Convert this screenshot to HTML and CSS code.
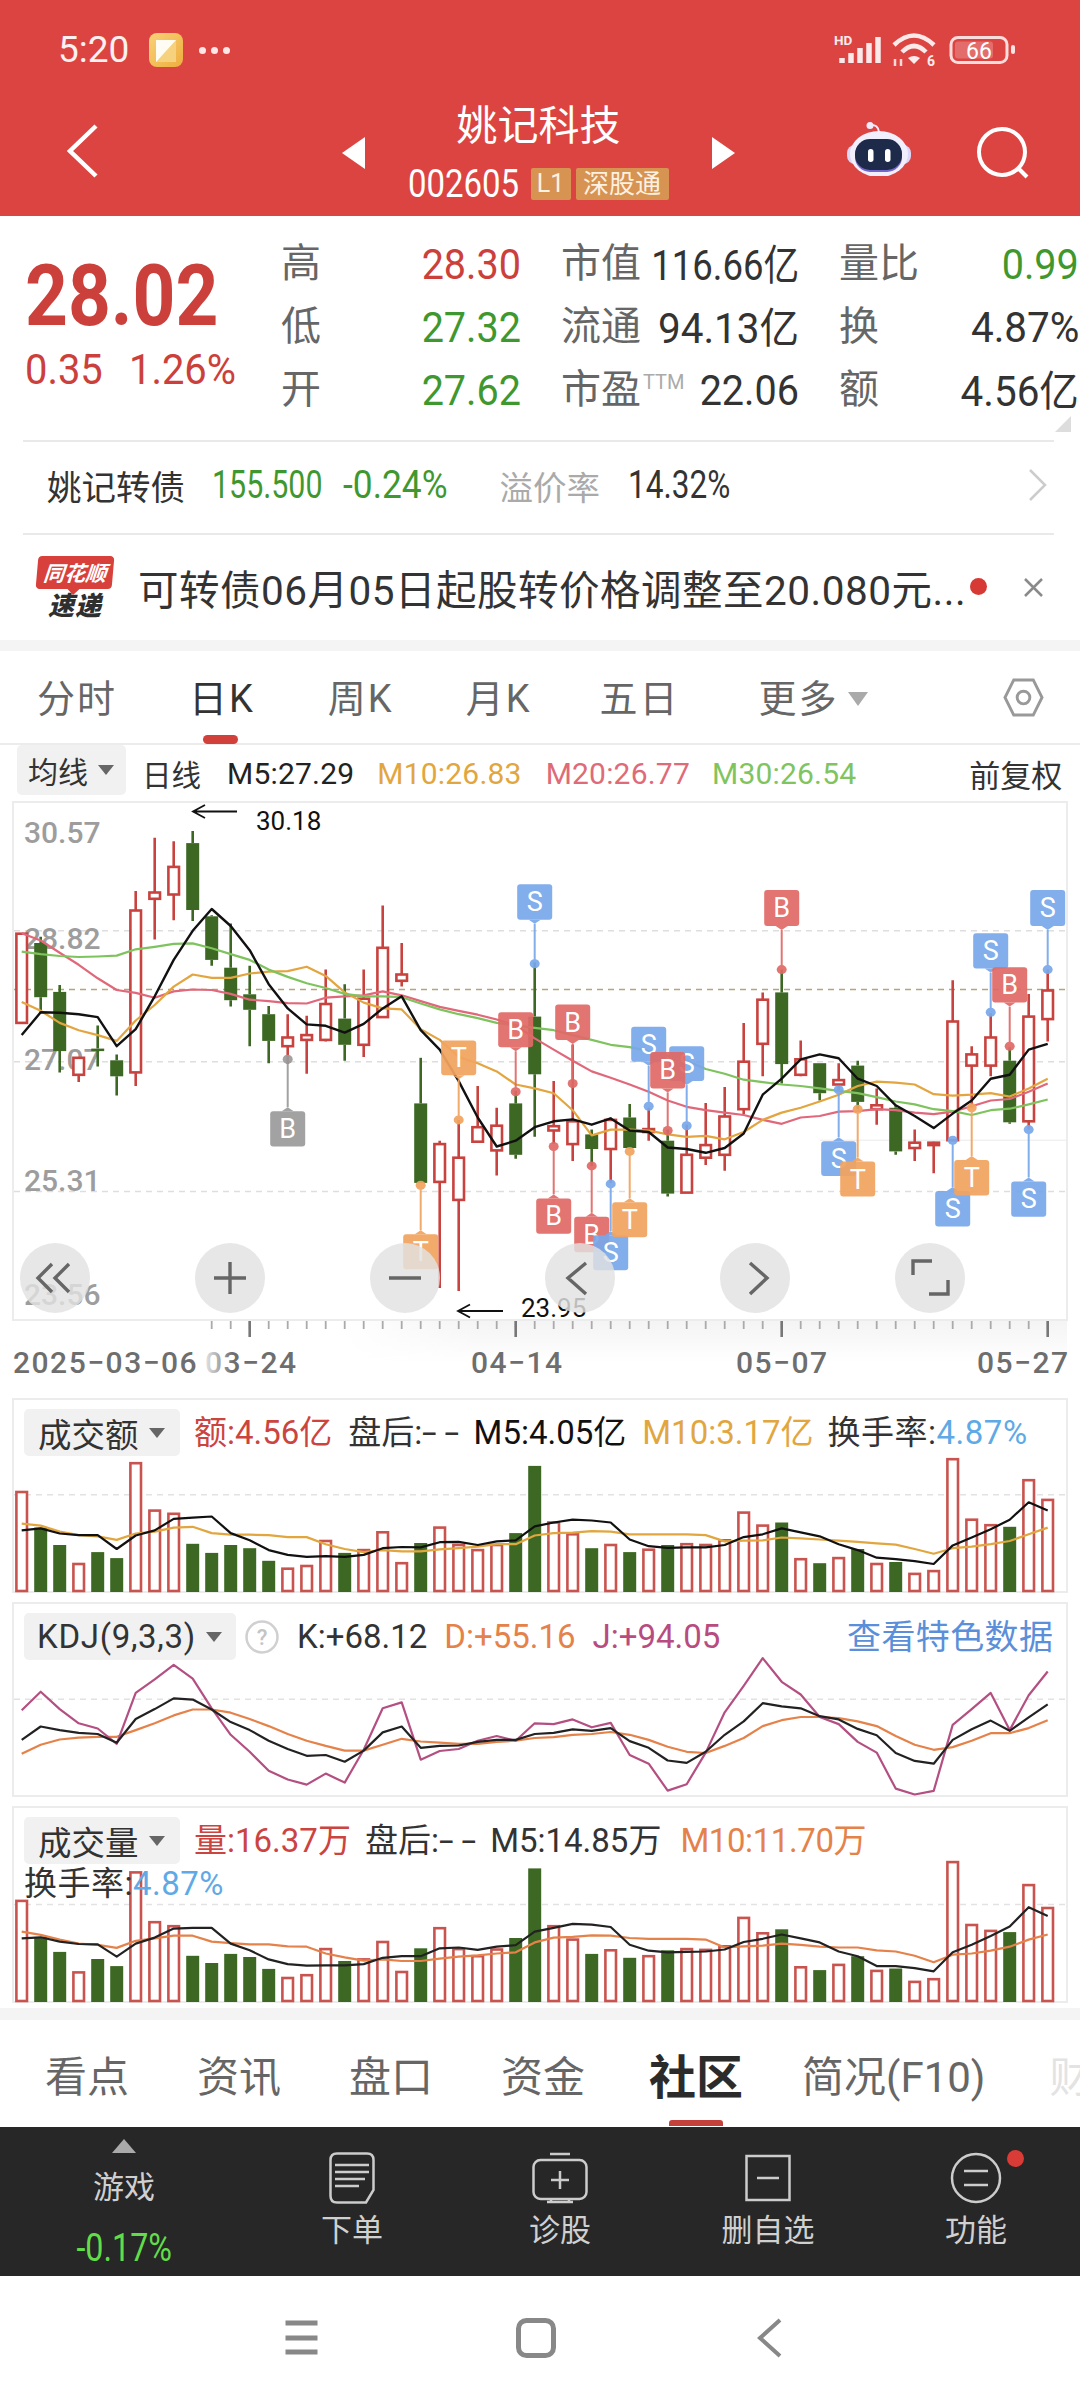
FILE: index.html
```html
<!DOCTYPE html>
<html lang="zh-CN">
<head>
<meta charset="utf-8">
<title>姚记科技</title>
<link rel="stylesheet" href="styles.css">
</head>
<body>
<div class="page">
  <header class="top">
    <div class="status">
      <span class="clock">5:20</span>
      <svg class="app-icon" viewBox="0 0 34 34">
        <defs><linearGradient id="appGrad" x1="0" y1="0" x2="1" y2="1"><stop offset="0" stop-color="#f9d178"/><stop offset="1" stop-color="#eeae3e"/></linearGradient></defs>
        <rect width="34" height="34" rx="8" fill="url(#appGrad)"/>
        <path d="M7 7H27V19L13 29H7Z" fill="#fffdf3"/>
        <path d="M27 7V29H7Z" fill="#f7d27e"/>
      </svg>
      <span class="dots"><i></i><i></i><i></i></span>
      <svg class="status-right" viewBox="0 0 184 32">
        <text x="1" y="10" class="hd">HD</text>
        <path d="M9 28v-5M18 28v-10M27 28v-15M36 28v-20M45 28v-26" class="bars"/>
        <path d="M61 10Q81 -9 101 10M69 17Q81 5 93 17" class="wifi"/>
        <path d="M75 23Q81 19 87 23L81 29Z" fill="#fff" opacity=".9"/>
        <path d="M62 24v7M68 31v-7" class="arrows"/>
        <text x="94" y="31" class="six">6</text>
        <rect x="118" y="2.500" width="56" height="25" rx="7" class="batt"/>
        <rect x="122" y="6.500" width="38" height="17" rx="3" fill="#fff" opacity=".22"/>
        <rect x="178" y="10" width="4" height="9" rx="2" fill="#fff" opacity=".85"/>
        <text x="146" y="24" class="batt-num">66</text>
      </svg>
    </div>
    <div class="titlebar">
      <svg class="back" viewBox="0 0 31 54"><path d="M29 2 L3 27 L29 52"/></svg>
      <div class="stock">
        <svg class="tri" viewBox="0 0 23 32"><path d="M23 0V32L0 16Z"/></svg>
        <div class="stock-mid">
          <div class="stock-name">姚记科技</div>
          <div class="stock-code">
            <span class="code n">002605</span>
            <span class="tag tag-l">L1</span>
            <span class="tag tag-s">深股通</span>
          </div>
        </div>
        <svg class="tri" viewBox="0 0 23 32"><path d="M0 0V32L23 16Z"/></svg>
      </div>
      <svg class="robot" viewBox="0 0 64 54">
        <path d="M23 3Q31 2 32 10" fill="none" stroke="#efeafc" stroke-width="2"/>
        <circle cx="23" cy="3.500" r="3.500" fill="#efeafc"/>
        <rect x="0" y="23" width="64" height="19" rx="8" fill="#dcd7f6"/>
        <ellipse cx="32" cy="32" rx="29" ry="23" fill="#f2effd"/>
        <rect x="8" y="18" width="47" height="32" rx="15" fill="#7465c9"/>
        <rect x="8" y="17" width="47" height="31" rx="15" fill="#1e2a4a"/>
        <rect x="21" y="27" width="5.500" height="13" rx="2.700" fill="#fff"/>
        <rect x="38" y="27" width="5.500" height="13" rx="2.700" fill="#fff"/>
      </svg>
      <svg class="search" viewBox="0 0 52 52"><circle cx="25" cy="25" r="23"/><path d="M41 41l9 9"/></svg>
    </div>
  </header>

  <section class="quote">
    <div class="quote-main">
      <div class="price-box">
        <div class="price n">28.02</div>
        <div class="change n"><span>0.35</span><span>1.26%</span></div>
      </div>
      <div class="stats">
        <div class="stat"><span class="lab">高</span><span class="val n up">28.30</span></div>
        <div class="stat"><span class="lab">市值</span><span class="val n sx85">116.66<b>亿</b></span></div>
        <div class="stat"><span class="lab">量比</span><span class="val n down">0.99</span></div>
        <div class="stat"><span class="lab">低</span><span class="val n down">27.32</span></div>
        <div class="stat"><span class="lab">流通</span><span class="val n sx94">94.13<b>亿</b></span></div>
        <div class="stat"><span class="lab">换</span><span class="val n sx94">4.87%</span></div>
        <div class="stat"><span class="lab">开</span><span class="val n down">27.62</span></div>
        <div class="stat"><span class="lab">市盈<sup>TTM</sup></span><span class="val n">22.06</span></div>
        <div class="stat"><span class="lab">额</span><span class="val n sx94">4.56<b>亿</b></span></div>
      </div>
      <i class="corner"></i>
    </div>
    <div class="bond">
      <span class="bond-name">姚记转债</span>
      <span class="n bond-price">155.500</span>
      <span class="n bond-pct">-0.24%</span>
      <span class="bond-lab">溢价率</span>
      <span class="n bond-prem">14.32%</span>
      <svg class="bond-arrow" viewBox="0 0 19 32"><path d="M2 1 L17 16 L2 31"/></svg>
    </div>
    <div class="news">
      <div class="news-logo">
        <span class="logo-a">同花顺</span>
        <span class="logo-b">速递</span>
      </div>
      <span class="news-text">可转债06月05日起股转价格调整至20.080元...</span>
      <i class="news-dot"></i>
      <svg class="news-x" viewBox="0 0 19 19"><path d="M1 1 L18 18 M18 1 L1 18"/></svg>
    </div>
  </section>

  <div class="strip"></div>

  <nav class="period">
    <span class="ptab">分时</span>
    <span class="ptab on">日K</span>
    <span class="ptab week">周K</span>
    <span class="ptab month">月K</span>
    <span class="ptab five">五日</span>
    <span class="ptab more">更多<i class="caret-big"></i></span>
    <svg class="hex" viewBox="0 0 42 40"><path d="M11 2H31L40 20L31 38H11L2 20Z"/><circle cx="21" cy="20" r="6.500"/></svg>
  </nav>

  <div class="legend">
    <span class="pill">均线<i class="caret"></i></span>
    <span class="lg-day">日线</span>
    <span class="lg m5">M5:27.29</span>
    <span class="lg m10">M10:26.83</span>
    <span class="lg m20">M20:26.77</span>
    <span class="lg m30">M30:26.54</span>
    <span class="lg-adj">前复权</span>
  </div>

  <div class="chart"><svg id="kline" class="canvas" viewBox="0 801 1080 597"></svg></div>

  <section class="pane pane-a">
    <svg id="amount" class="canvas" viewBox="0 1398 1080 196"></svg>
    <div class="pane-head">
      <span class="pill big">成交额<i class="caret"></i></span>
      <span class="t red t1">额:4.56亿</span>
      <span class="t dark g16">盘后:<span class="dd">--</span></span>
      <span class="t ink g9">M5:4.05亿</span>
      <span class="t gold g16">M10:3.17亿</span>
      <span class="t dark g14 wide">换手率:<em>4.87%</em></span>
    </div>
  </section>

  <section class="pane pane-b">
    <svg id="kdj" class="canvas" viewBox="0 1602 1080 196"></svg>
    <div class="pane-head">
      <span class="pill kdj">KDJ(9,3,3)<i class="caret"></i></span>
      <svg class="help" viewBox="0 0 34 34"><circle cx="17" cy="17" r="15.500"/><text x="17" y="25">?</text></svg>
      <span class="t dark g18">K:+68.12</span>
      <span class="t orange g17">D:+55.16</span>
      <span class="t plum g17">J:+94.05</span>
      <span class="t link">查看特色数据</span>
    </div>
  </section>

  <section class="pane pane-c">
    <svg id="vol" class="canvas" viewBox="0 1806 1080 198"></svg>
    <div class="pane-head">
      <span class="pill big">成交量<i class="caret"></i></span>
      <span class="t red t1">量:16.37万</span>
      <span class="t dark g14">盘后:<span class="dd">--</span></span>
      <span class="t dark g9">M5:14.85万</span>
      <span class="t orange g19 tight">M10:11.70万</span>
    </div>
    <div class="pane-sub"><span class="t dark wide">换手率:<em>4.87%</em></span></div>
  </section>

  <div class="strip strip-b"></div>

  <nav class="sections">
    <span>看点</span>
    <span>资讯</span>
    <span>盘口</span>
    <span>资金</span>
    <span class="on">社区</span>
    <span class="f10">简况(F10)</span>
    <span class="fade">财</span>
  </nav>

  <div class="dock">
    <div class="dock-item quote-item">
      <i class="dock-up"></i>
      <span class="dock-lab">游戏</span>
      <span class="dock-pct n">-0.17%</span>
    </div>
    <div class="dock-item">
      <svg class="dk" viewBox="0 0 46 52"><path d="M8 1.500H38Q44.500 1.500 44.500 8V38L37 50.500H8Q1.500 50.500 1.500 44V8Q1.500 1.500 8 1.500Z"/><path d="M6 13H40M6 20H40M6 27H36M6 34H30"/></svg>
      <span class="dock-lab">下单</span>
    </div>
    <div class="dock-item">
      <svg class="dk" viewBox="0 0 56 52"><path d="M18 2H38"/><rect x="1.500" y="8" width="53" height="39" rx="7"/><path d="M19 47v3M37 47v3M15 50H41"/><path d="M28 19V37M19 28H37"/></svg>
      <span class="dock-lab">诊股</span>
    </div>
    <div class="dock-item">
      <svg class="dk" viewBox="0 0 46 52"><rect x="1.500" y="4" width="43" height="44"/><path d="M12 26H34"/></svg>
      <span class="dock-lab">删自选</span>
    </div>
    <div class="dock-item">
      <svg class="dk" viewBox="0 0 52 52"><circle cx="26" cy="26" r="24"/><path d="M14 19H38M14 33H38"/></svg>
      <i class="dock-dot"></i>
      <span class="dock-lab">功能</span>
    </div>
  </div>

  <div class="sysnav">
    <svg class="sys s-menu" viewBox="0 0 37 36"><path d="M2.500 3H34.500M2.500 18H34.500M2.500 32H34.500"/></svg>
    <svg class="sys s-home" viewBox="0 0 40 40"><rect x="2.500" y="2.500" width="35" height="35" rx="8"/></svg>
    <svg class="sys s-back" viewBox="0 0 26 40"><path d="M23 2 L3 20 L23 38"/></svg>
  </div>
</div>
<script src="chart.js"></script>
</body>
</html>
```

FILE: styles.css
```css
* { box-sizing: border-box; }
html, body { margin: 0; padding: 0; background: #fff; }
body { font-family: Roboto, "Noto Sans CJK SC", sans-serif; color: #333; }
.page { width: 1080px; height: 2400px; overflow: hidden; display: flex; flex-direction: column; }
i { display: block; font-style: normal; }
.n { font-family: Roboto, "Noto Sans CJK SC", sans-serif; white-space: nowrap; }
.n b { font-family: "Noto Sans CJK SC", sans-serif; font-weight: 400; }

/* header */
.top { height: 216px; background: #dc4442; color: #fff; flex: none; }
.status { height: 101px; padding: 33px 0 0 58px; display: flex; align-items: flex-start; position: relative; }
.clock { font-size: 37px; line-height: 34px; opacity: .92; }
.app-icon { width: 34px; height: 34px; margin-left: 20px; }
.dots { display: flex; gap: 5px; margin: 14px 0 0 16px; }
.dots i { width: 7px; height: 7px; border-radius: 50%; background: #ffe6e6; }
.status-right { position: absolute; left: 833px; top: 35px; width: 184px; height: 32px; overflow: visible; }
.hd { font: 700 13.5px Roboto, sans-serif; fill: #fff; opacity: .9; }
.bars { stroke: #fff; stroke-width: 5.5px; fill: none; opacity: .88; }
.wifi { stroke: #fff; stroke-width: 4.5px; fill: none; opacity: .88; }
.arrows { stroke: #fff; stroke-width: 2.5px; fill: none; opacity: .8; }
.six { font: 700 14px Roboto, sans-serif; fill: #fff; opacity: .9; }
.batt { fill: none; stroke: #fff; stroke-width: 3px; opacity: .82; }
.batt-num { font: 400 23px Roboto, sans-serif; fill: #fff; text-anchor: middle; }

.titlebar { height: 115px; padding-left: 67px; display: flex; align-items: flex-start; }
.back { width: 31px; height: 54px; margin-top: 23px; fill: none; stroke: #fff; stroke-width: 4.5px; flex: none; }
.stock { width: 393px; margin-left: 244px; display: flex; justify-content: space-between; align-items: flex-start; flex: none; }
.tri { width: 23px; height: 32px; margin-top: 36px; fill: #fff; flex: none; }
.stock-mid { display: flex; flex-direction: column; align-items: center; }
.stock-name { font-size: 41px; line-height: 50px; height: 50px; }
.stock-code { display: flex; align-items: center; margin-top: 17px; height: 32px; }
.code { font-size: 38px; line-height: 32px; margin: 0 11px 0 -17px; transform: scaleX(.867); transform-origin: right center; }
.tag { background: #d79351; color: #fdf1e2; font-size: 26px; line-height: 32px; height: 32px; border-radius: 2px; text-align: center; }
.tag-l { width: 40px; margin-right: 5px; font-size: 25px; }
.tag-s { width: 93px; }
.robot { width: 64px; height: 54px; margin: 21px 0 0 112px; flex: none; }
.search { width: 52px; height: 52px; margin: 26px 0 0 66px; fill: none; stroke: #fff; stroke-width: 4px; flex: none; }

/* quote */
.quote { height: 424px; flex: none; background: #fff; }
.quote-main { height: 224px; display: flex; position: relative; }
.price-box { width: 281px; padding: 40px 0 0 25px; flex: none; }
.price { font-size: 86px; font-weight: 700; line-height: 80px; color: #cc403c; transform: scaleX(.87); transform-origin: left center; }
.change { display: flex; gap: 22px; font-size: 42px; line-height: 50px; margin-top: 9px; color: #cc403c; }
.change span { transform: scaleX(.95); transform-origin: left center; }
.stats { display: grid; grid-template-columns: 240px 238px 240px; grid-auto-rows: 63px; column-gap: 40px; padding-top: 16px; }
.stat { display: flex; justify-content: space-between; align-items: center; white-space: nowrap; }
.lab { font-size: 40px; color: #666; line-height: 50px; }
.lab sup { font-size: 20px; color: #aaa; vertical-align: 14px; line-height: 0; margin-left: 2px; }
.val { font-size: 43px; line-height: 50px; color: #333; transform: scaleX(.92); transform-origin: right center; }
.val b { font-size: 42px; }
.val.sx85 { transform: scaleX(.85); margin-left: -20px; }
.val.sx94 { transform: scaleX(.94); }
.val.up { color: #cc403c; }
.val.down { color: #3f982f; }
.corner { position: absolute; right: 9px; bottom: 8px; width: 0; height: 0; border-left: 16px solid transparent; border-bottom: 16px solid #ddd; }

.bond { height: 95px; margin: 0 26px 0 23px; border-top: 2px solid #e9e9e9; border-bottom: 2px solid #e9e9e9; display: flex; align-items: center; padding: 0 0 5px 24px; position: relative; white-space: nowrap; }
.bond-name { font-size: 34.5px; color: #333; width: 165px; }
.bond-price, .bond-pct { font-size: 38px; color: #3f982f; transform-origin: left center; }
.bond-price { transform: scaleX(.8); }
.bond-pct { margin-left: -7px; transform: scaleX(.93); }
.bond-lab { font-size: 33.5px; color: #aaa; margin-left: 44px; }
.bond-prem { font-size: 38px; color: #333; margin-left: 28px; transform: scaleX(.83); transform-origin: left center; }
.bond-arrow { position: absolute; left: 1005px; top: 27px; width: 19px; height: 32px; fill: none; stroke: #ccc; stroke-width: 2.5px; }

.news { height: 105px; padding-left: 36px; display: flex; align-items: center; position: relative; }
.news-logo { width: 78px; height: 63px; flex: none; display: flex; flex-direction: column; align-items: center; font-family: "Noto Sans CJK SC", sans-serif; font-style: italic; white-space: nowrap; }
.logo-a { width: 76px; height: 33px; background: #d8403c; color: #fff; font-size: 21px; font-weight: 700; line-height: 32px; text-align: center; border-radius: 4px; transform: skewX(-5deg); position: relative; }
.logo-a::after { content: ""; position: absolute; left: 32px; top: 33px; width: 0; height: 0; border-left: 6px solid transparent; border-right: 6px solid transparent; border-top: 6px solid #d8403c; }
.logo-b { font-size: 26px; font-weight: 900; line-height: 30px; letter-spacing: 1px; color: #2f2f2f; }
.news-text { font-size: 40.5px; letter-spacing: .5px; color: #333; margin-left: 24px; white-space: nowrap; }
.news-dot { position: absolute; left: 970px; top: 43px; width: 17px; height: 17px; border-radius: 50%; background: #d73a35; }
.news-x { position: absolute; left: 1024px; top: 43px; width: 19px; height: 19px; fill: none; stroke: #8a8a8a; stroke-width: 2.5px; }

.strip { height: 11px; background: #f4f4f4; flex: none; }

/* period */
.period { height: 94px; flex: none; border-bottom: 2px solid #ececec; display: flex; align-items: flex-start; padding: 27px 0 0 37px; gap: 70px; position: relative; }
.ptab { font-size: 38px; line-height: 42px; color: #666; letter-spacing: 2px; position: relative; white-space: nowrap; }
.ptab.on { color: #333; margin-left: 2px; }
.ptab.on::after { content: ""; position: absolute; left: 14px; top: 57px; width: 35px; height: 9px; border-radius: 5px; background: #d2403b; }
.ptab.week { margin-left: 3px; }
.ptab.month { margin-left: 2px; }
.ptab.five { margin-left: -2px; }
.more { margin-left: 9px; display: flex; align-items: center; }
.caret-big { width: 0; height: 0; border-left: 10px solid transparent; border-right: 10px solid transparent; border-top: 14px solid #aaa; margin-left: 9px; }
.hex { position: absolute; left: 1003px; top: 27px; width: 41px; height: 39px; fill: none; stroke: #999; stroke-width: 3px; }

/* legend */
.legend { height: 56px; flex: none; display: flex; align-items: center; padding-left: 17px; position: relative; white-space: nowrap; }
.pill { display: flex; align-items: center; background: #f1f1f1; border-radius: 5px; color: #333; white-space: nowrap; }
.legend .pill { width: 109px; height: 50px; padding-left: 11px; font-size: 30px; margin-top: -6px; }
.caret { width: 0; height: 0; border-left: 8px solid transparent; border-right: 8px solid transparent; border-top: 10px solid #666; margin-left: 10px; }
.lg-day { font-size: 29.5px; margin-left: 16px; color: #333; }
.lg { font-size: 30px; font-weight: 450; letter-spacing: .2px; }
.m5 { color: #222; margin-left: 26px; }
.m10 { color: #e2a63f; margin-left: 23px; }
.m20 { color: #df6b78; margin-left: 24px; }
.m30 { color: #80c460; margin-left: 22px; }
.lg-adj { font-size: 31px; margin-left: 113px; color: #333; }

/* chart */
.chart { height: 597px; flex: none; position: relative; }
.canvas { display: block; position: absolute; left: 0; top: 0; width: 1080px; height: 100%; }
.axis { font: 500 30px Roboto, sans-serif; fill: #9d9d9d; }
.date { font: 500 30px Roboto, sans-serif; fill: #6e6e6e; letter-spacing: 1.5px; }
.note { font: 400 26px Roboto, sans-serif; fill: #111; }
.badge { font: 400 27px Roboto, sans-serif; fill: #fff; text-anchor: middle; }

/* panes */
.pane { flex: none; position: relative; }
.pane-a { height: 196px; margin-bottom: 8px; }
.pane-b { height: 196px; margin-bottom: 8px; }
.pane-c { height: 198px; }
.pane-head { position: relative; display: flex; align-items: center; padding: 11px 0 0 24px; height: 58px; white-space: nowrap; }
.pane-head .pill { height: 47px; font-size: 33.5px; width: 156px; padding-left: 14px; flex: none; }
.pane-head .pill.kdj { width: 212px; padding-left: 13px; font-size: 33px; letter-spacing: .7px; }
.kdj .caret { margin-left: 10px; }
.t { font-size: 33px; line-height: 44px; }
.t em { font-style: normal; color: #5ea9e6; }
.wide { letter-spacing: .5px; }
.tight { letter-spacing: -.4px; }
.dd { display: inline-block; letter-spacing: 5px; margin-right: 14px; transform: scaleX(1.6); transform-origin: left center; }
.red { color: #cc443f; }
.dark { color: #333; }
.ink { color: #111; }
.gold { color: #e2a63f; }
.orange { color: #e5824a; }
.plum { color: #b84c80; }
.link { color: #5b8fd9; position: absolute; left: 847px; font-size: 34px; letter-spacing: .4px; }
.t1 { margin-left: 14px; }
.g9 { margin-left: 9px; }
.g14 { margin-left: 14px; }
.g16 { margin-left: 16px; }
.g17 { margin-left: 17px; }
.g18 { margin-left: 18px; }
.g19 { margin-left: 19px; }
.help { width: 34px; height: 34px; margin-left: 9px; flex: none; fill: none; stroke: #d0d0d0; stroke-width: 2.5px; }
.help text { font: 500 22px Roboto, sans-serif; fill: #c4c4c4; stroke: none; text-anchor: middle; }
.pane-sub { position: relative; padding-left: 24px; height: 36px; margin-top: -2px; }

/* section tabs */
.strip-b { margin-top: 4px; height: 12px; }
.sections { height: 107px; flex: none; display: flex; align-items: center; padding-left: 45px; gap: 68px; white-space: nowrap; overflow: hidden; position: relative; }
.sections span { font-size: 42px; color: #666; flex: none; position: relative; }
.sections .on { font-size: 47px; font-weight: 700; color: #2b2b2b; margin-left: -4px; }
.sections .on::after { content: ""; position: absolute; left: 20px; bottom: -18px; width: 54px; height: 6px; background: #c4403b; border-radius: 3px 3px 0 0; }
.sections .f10 { margin-left: -9px; font-size: 42px; }
.sections .fade { color: #e3e3e3; margin-left: -4px; }

/* dock */
.dock { height: 149px; flex: none; background: #272727; display: grid; grid-template-columns: 248px repeat(4, 208px); }
.dock-item { display: flex; flex-direction: column; align-items: center; padding-top: 25px; position: relative; }
.dock-item.quote-item { padding-top: 12px; }
.dk { height: 52px; width: 56px; fill: none; stroke: #ccc; stroke-width: 2.5px; }
.dock-lab { font-size: 31px; line-height: 40px; color: #d0d0d0; margin-top: 7px; }
.quote-item .dock-lab { margin-top: 15px; }
.dock-up { width: 0; height: 0; border-left: 12px solid transparent; border-right: 12px solid transparent; border-bottom: 14px solid #aaa; }
.dock-pct { font-size: 38px; line-height: 44px; color: #62dd4a; margin-top: 18px; transform: scaleX(.85); }
.dock-dot { position: absolute; left: 135px; top: 23px; width: 17px; height: 17px; border-radius: 50%; background: #d93c37; }

/* system nav */
.sysnav { flex: 1; position: relative; }
.sys { position: absolute; fill: none; stroke: #888; }
.s-menu { left: 283px; top: 44px; width: 37px; height: 36px; stroke-width: 5px; }
.s-home { left: 516px; top: 42px; width: 40px; height: 40px; stroke-width: 5px; }
.s-back { left: 757px; top: 42px; width: 26px; height: 40px; stroke-width: 4px; }
```

FILE: chart.js
```js
var X = function (i) { return 21.7 + 19 * i; };
var kY = function (z) { return +(640 + z / 2.063).toFixed(1); };
var pY = function (z) { return +(1390 + z / 2.529).toFixed(1); };
var RED = '#c8433f', GREEN = '#3d6823', BARRED = '#c9544f';

function line(vals, toY, color, width) {
  var d = vals.map(function (v, i) { return (i ? 'L' : 'M') + X(i).toFixed(1) + ' ' + toY(v); }).join('');
  return '<path d="' + d + '" fill="none" stroke="' + color + '" stroke-width="' + width + '" stroke-linejoin="round"/>';
}
function dash(y, color) {
  return '<path d="M14 ' + y + 'H1066" stroke="' + color + '" stroke-width="1.5" stroke-dasharray="6 5" fill="none"/>';
}

/* [high, bodyTop, bodyBottom, low, 1 = hollow red / 0 = solid green] in crop coordinates */
var candles = [
  [606,606,790,790,1],[612,625,737,770,0],[712,726,848,892,0],[860,862,897,912,1],[795,843,848,880,0],
  [855,867,900,940,0],[518,558,892,920,1],[408,521,534,618,1],[415,468,525,578,1],[394,419,557,580,0],
  [568,570,660,672,0],[585,676,743,756,0],[672,731,763,838,0],[755,772,827,873,0],[772,820,838,875,1],
  [775,815,825,895,1],[680,751,825,828,1],[710,781,835,868,0],[680,740,835,860,1],[548,635,778,780,1],
  [625,690,703,715,1],[862,956,1120,1120,0],[1033,1040,1118,1337,1],[990,1068,1155,1343,1],[920,1005,1035,1035,1],
  [965,1002,1053,1105,1],[930,956,1062,1070,0],[665,777,896,1025,0],[910,1003,1012,1040,1],[835,993,1040,1075,1],
  [1010,1020,1050,1085,0],[985,990,1050,1120,1],[957,985,1048,1050,0],[965,1009,1015,1033,1],[1010,1033,1142,1148,0],
  [1000,1062,1140,1140,1],[955,1042,1068,1083,1],[922,983,1062,1095,1],[790,870,968,978,1],[727,742,833,900,1],
  [680,727,875,915,0],[826,865,897,900,1],[873,873,935,950,0],[873,908,917,930,1],[868,878,953,968,0],
  [925,960,968,1000,1],[960,965,1055,1062,0],[1010,1037,1048,1075,1],[1035,1037,1042,1100,1],[702,787,1032,1033,1],
  [838,855,878,965,1],[770,820,878,900,1],[840,868,995,998,0],[730,777,993,1010,1],[680,723,782,828,1]
];
var m5 = [815,768,769,772,778,838,803,735,660,600,555,590,640,710,760,793,796,810,792,760,735,805,845,910,985,1045,1033,1005,993,989,1000,987,1012,1015,1047,1050,1058,1048,1018,938,905,865,855,863,905,920,960,982,1007,977,950,905,897,845,833];
var m10 = [747,765,790,805,815,827,785,753,715,690,697,697,688,684,683,674,693,727,748,760,762,803,825,860,873,890,917,925,935,970,1022,1010,1010,1012,1020,1025,1023,1030,1015,990,975,965,952,938,920,911,913,917,937,940,938,935,942,925,905];
var m20 = [605,620,645,670,698,722,728,738,725,721,722,730,742,745,749,750,738,735,733,725,733,745,757,765,773,783,795,822,845,868,890,903,917,932,950,963,970,975,980,990,998,985,982,973,972,968,970,975,978,973,962,950,947,932,915];
var m30 = [643,648,652,654,653,651,638,633,627,626,636,648,660,680,695,708,718,730,735,735,737,750,762,772,780,790,795,800,805,815,825,835,840,848,858,868,885,895,907,912,917,920,925,930,935,943,952,958,968,972,980,970,967,958,948];

var COL = { B: '#e06a67', S: '#79a8ea', T: '#f2a460', G: '#9b9b9b' };
/* [index, letter, badgeTop, badgeBottom, dot] in crop coordinates */
var marks = [
  [14,'G',972,1045,865],[21,'T',1226,1298,1125],[23,'T',826,898,990],[26,'B',768,840,932],[27,'S',504,577,668],
  [28,'B',1152,1225,1045],[29,'B',752,825,915],[30,'B',1190,1263,1085],[31,'S',1228,1300,1122],[32,'T',1160,1232,1055],
  [33,'S',798,870,962],[35,'S',838,910,1002],[34,'B',850,925,1012],[40,'B',516,590,680],[43,'S',1034,1106,928],
  [44,'T',1076,1148,968],[49,'S',1137,1210,1032],[50,'T',1073,1146,965],[51,'S',605,678,768],[53,'S',1117,1190,1010],
  [52,'B',675,748,838],[54,'S',516,590,680]
];

function kline() {
  var s = '<defs><linearGradient id="fadeR" x1="0" x2="1" y1="0" y2="0"><stop offset="0" stop-color="#fff"/><stop offset="1" stop-color="#fff" stop-opacity="0"/></linearGradient>' +
    '<linearGradient id="axisShade" x1="0" x2="0" y1="0" y2="1"><stop offset="0" stop-color="#efefef"/><stop offset="1" stop-color="#fff"/></linearGradient></defs>';
  s += '<rect x="340" y="1321" width="727" height="42" fill="url(#axisShade)" opacity=".7"/>';
  s += '<rect x="340" y="1321" width="140" height="42" fill="url(#fadeR)"/>';
  s += '<rect x="13" y="802" width="1054" height="518" fill="#fff" stroke="#ececec" stroke-width="2"/>';
  s += dash(kY(600), '#dedede') + dash(kY(870), '#dedede') + dash(kY(1138), '#dedede') + dash(kY(721), '#b9a27c');
  s += '<path d="M820 ' + kY(1032) + 'H1066" stroke="#eaeaea" stroke-width="1" fill="none"/>';
  [['30.57',418],['28.82',638],['27.07',888],['25.31',1137],['23.56',1372]].forEach(function (a) {
    s += '<text x="24" y="' + kY(a[1]) + '" class="axis">' + a[0] + '</text>';
  });
  candles.forEach(function (c, i) {
    var x = X(i), col = c[4] ? RED : GREEN;
    s += '<path d="M' + x + ' ' + kY(c[0]) + 'V' + kY(c[1]) + 'M' + x + ' ' + kY(c[2]) + 'V' + kY(c[3]) + '" stroke="' + col + '" stroke-width="2.6" fill="none"/>';
    if (c[4]) s += '<rect x="' + (x - 5.3) + '" y="' + kY(c[1]) + '" width="10.6" height="' + (kY(c[2]) - kY(c[1])) + '" fill="#fff" stroke="' + RED + '" stroke-width="2.6"/>';
    else s += '<rect x="' + (x - 6.5) + '" y="' + kY(c[1]) + '" width="13" height="' + (kY(c[2]) - kY(c[1])) + '" fill="' + GREEN + '"/>';
  });
  s += line(m20, kY, '#e0687a', 2.2) + line(m10, kY, '#e3a53f', 2.2) + line(m30, kY, '#7fc35f', 2.2) + line(m5, kY, '#111', 2.4);
  marks.forEach(function (m) {
    var x = X(m[0]), c = COL[m[1]], top = kY(m[2]), bot = kY(m[3]), dot = kY(m[4]), below = top > dot;
    var tipY = below ? top - 4 : bot + 4, baseY = below ? top : bot;
    s += '<g opacity=".93"><path d="M' + x + ' ' + dot + 'V' + tipY + '" stroke="' + c + '" stroke-width="2"/>' +
      '<ellipse cx="' + x + '" cy="' + dot + '" rx="5" ry="4.500" fill="' + c + '"/>' +
      '<path d="M' + (x - 6) + ' ' + baseY + 'L' + x + ' ' + tipY + 'L' + (x + 6) + ' ' + baseY + 'Z" fill="' + c + '"/>' +
      '<rect x="' + (x - 17.5) + '" y="' + top + '" width="35" height="' + (bot - top) + '" rx="3" fill="' + c + '"/></g>' +
      '<text x="' + x + '" y="' + (top + 27) + '" class="badge">' + (m[1] === 'G' ? 'B' : m[1]) + '</text>';
  });
  /* high and low notes */
  s += '<path d="M237 811.500H194M205 805L193 811.500L205 818" stroke="#111" stroke-width="1.800" fill="none"/><text x="256" y="830" class="note">30.18</text>';
  s += '<path d="M503 1311H459M470 1304.500L458 1311L470 1317.500" stroke="#111" stroke-width="1.800" fill="none"/><text x="521" y="1317" class="note">23.95</text>';
  /* ticks */
  var t = '';
  for (var i = 10; i < 55; i++) {
    t += 'M' + X(i).toFixed(1) + ' 1321V1329';
  }
  s += '<path d="' + t + '" stroke="#aaa" stroke-width="1.800" fill="none"/>';
  var t2 = '';
  [12, 26, 40, 54].forEach(function (i) { t2 += 'M' + X(i).toFixed(1) + ' 1321V1337'; });
  s += '<path d="' + t2 + '" stroke="#777" stroke-width="2.600" fill="none"/>';
  /* dates */
  [['2025-03-06',13],['03-24',205],['04-14',471],['05-07',736],['05-27',977]].forEach(function (a) {
    s += '<text x="' + a[1] + '" y="1373" class="date">' + a[0].replace(/-/g, '\u2212') + '</text>';
  });
  s += '<rect x="199" y="1345" width="34" height="34" fill="url(#fadeR)"/>';
  /* zoom buttons */
  [55, 230, 405, 580, 755, 930].forEach(function (cx) {
    s += '<circle cx="' + cx + '" cy="1278" r="35" fill="#e2e2e2" opacity=".82"/>';
  });
  s += '<path d="M52 1264L38 1278L52 1292M69 1264L55 1278L69 1292M214 1278H246M230 1262V1294M389 1278H421M586 1263L568 1278L586 1294M750 1263L767 1278L750 1294M913 1275V1261H932M948 1280V1294H929" fill="none" stroke="#666" stroke-width="3.400"/>';
  document.getElementById('kline').innerHTML = s;
}

var A = [258,348,392,440,410,425,185,305,313,389,412,392,400,432,452,445,382,412,405,360,438,387,348,392,405,392,362,192,335,365,400,392,410,404,392,390,392,380,310,343,335,428,438,425,402,440,435,465,458,175,328,342,346,228,278];
var AK = [355,350,363,367,367,402,368,355,326,323,320,362,380,405,417,422,420,422,417,400,397,398,385,384,392,383,380,345,335,328,330,335,378,395,399,398,398,392,372,365,350,360,370,390,405,424,428,433,440,393,373,352,328,284,305];
var AO = [338,343,358,367,370,379,363,358,348,346,362,366,366,367,372,372,390,402,410,405,408,408,403,400,396,390,390,368,362,361,357,358,365,365,365,365,367,383,381,380,373,375,378,381,384,388,391,402,414,400,396,390,382,365,348];
var V = [1292,1383,1421,1473,1439,1457,1220,1346,1356,1431,1449,1426,1434,1464,1487,1480,1414,1444,1440,1396,1472,1412,1361,1414,1432,1415,1386,1210,1356,1390,1426,1417,1436,1432,1417,1414,1416,1407,1335,1374,1364,1460,1467,1454,1432,1469,1463,1497,1490,1194,1353,1368,1371,1252,1310];
var VK = [1387,1384,1395,1401,1402,1433,1400,1385,1362,1360,1360,1400,1417,1440,1452,1456,1455,1455,1452,1436,1432,1432,1412,1410,1416,1408,1404,1370,1360,1350,1352,1358,1403,1418,1422,1421,1420,1415,1396,1388,1377,1387,1397,1420,1432,1457,1457,1462,1470,1422,1403,1381,1357,1308,1330];
var VO = [1370,1378,1390,1400,1403,1411,1393,1387,1380,1380,1395,1399,1402,1402,1407,1408,1425,1435,1443,1440,1444,1444,1438,1433,1430,1425,1422,1397,1385,1383,1379,1380,1386,1388,1388,1388,1390,1410,1407,1405,1400,1403,1408,1410,1410,1417,1420,1431,1447,1428,1425,1418,1408,1390,1377];
var K = [885,851,860,867,870,892,832,807,780,783,808,840,860,887,908,925,923,940,912,866,851,905,900,899,890,885,885,870,867,858,862,855,888,905,937,943,915,872,838,792,800,805,825,833,857,873,918,938,945,885,858,836,862,828,795];
var D = [920,897,884,879,877,877,860,843,823,808,808,816,832,850,870,887,900,912,912,897,882,889,892,895,895,890,887,880,878,872,870,865,872,885,902,915,918,900,880,850,835,827,827,830,838,850,875,897,910,903,887,868,868,855,835];
var J = [810,763,807,843,856,895,766,732,695,730,805,872,915,963,985,998,970,993,910,805,790,935,913,908,887,875,887,843,845,833,853,842,923,945,1013,997,917,815,748,678,738,770,827,845,890,917,1008,1023,1014,847,807,766,860,772,712];

function frame(top, bottom) {
  return '<rect x="13" y="' + top + '" width="1054" height="' + (bottom - top) + '" fill="#fff" stroke="#ececec" stroke-width="2"/>';
}
function bars(id, tops, base, grid, frameTop, frameBot, l1, c1, l2, c2) {
  var s = frame(frameTop, frameBot) + dash(pY(grid), '#e2e2e2');
  tops.forEach(function (z, i) {
    var x = X(i), up = candles[i][4] === 1, y = pY(z), h = base - y;
    if (up) s += '<rect x="' + (x - 5.3) + '" y="' + y + '" width="10.6" height="' + (h - 1) + '" fill="#fff" stroke="' + BARRED + '" stroke-width="2.600"/>';
    else s += '<rect x="' + (x - 6.5) + '" y="' + y + '" width="13" height="' + h + '" fill="' + GREEN + '"/>';
  });
  s += line(l1, pY, c1, 2.2) + line(l2, pY, c2, 2.2);
  document.getElementById(id).innerHTML = s;
}
function kdj() {
  var s = frame(1603, 1796) + dash(pY(782), '#e2e2e2');
  s += line(D, pY, '#e5824a', 2.2) + line(J, pY, '#b44f82', 2.2) + line(K, pY, '#222', 2.2);
  document.getElementById('kdj').innerHTML = s;
}
kline();
bars('amount', A, 1592, 265, 1399, 1592, AO, '#e2a63f', AK, '#111');
kdj();
bars('vol', V, 2002, 1301, 1807, 2002, VO, '#e5824a', VK, '#222');
```
